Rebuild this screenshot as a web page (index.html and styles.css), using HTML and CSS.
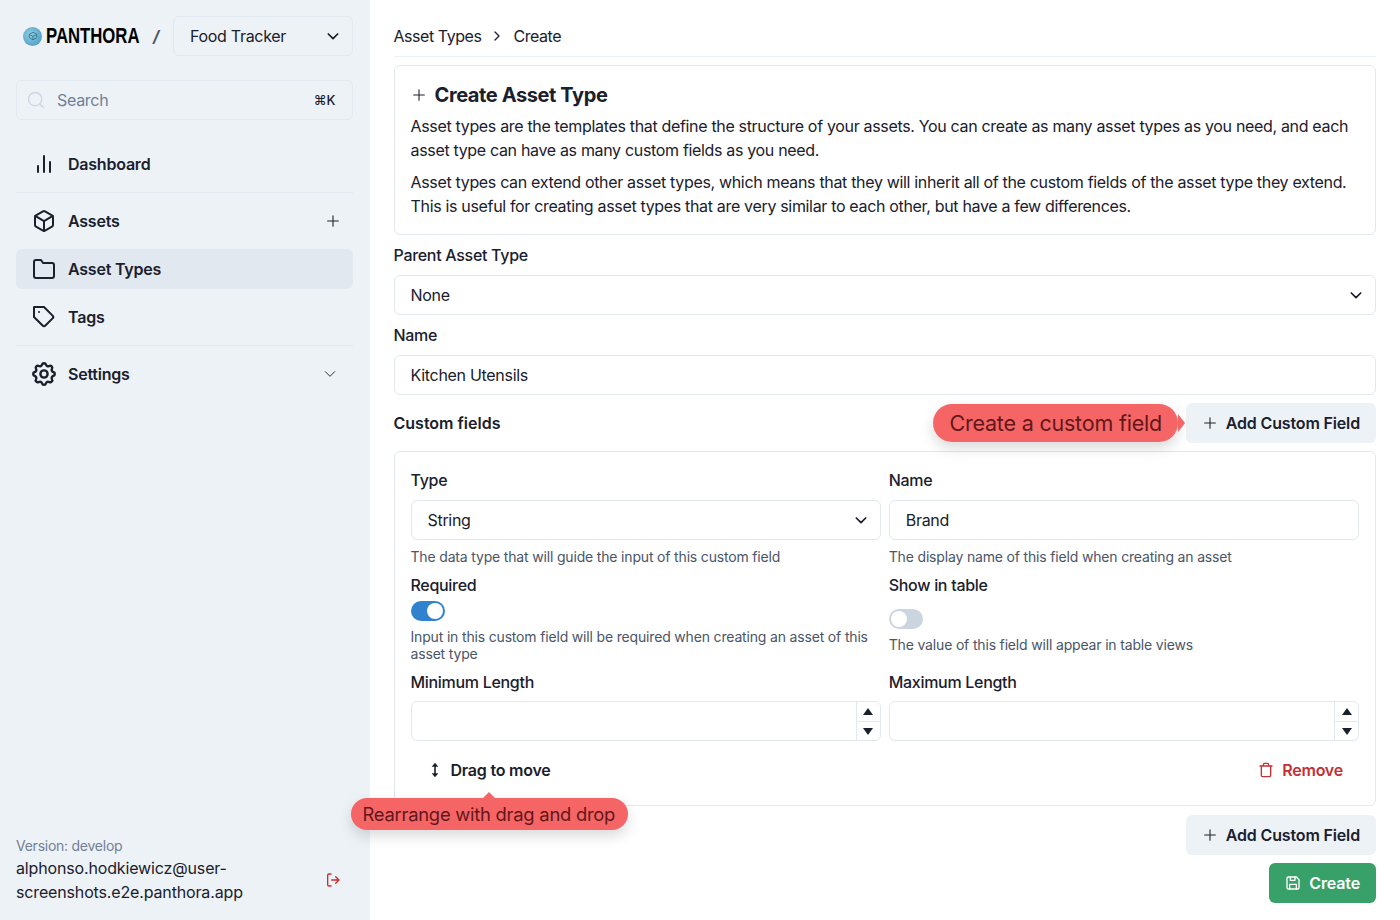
FILE: index.html
```html
<!DOCTYPE html>
<html lang="en">
<head>
    <meta charset="UTF-8">
    <meta name="viewport" content="width=device-width, initial-scale=1.0">
    <title>Create Asset Type - Panthora</title>
    <link rel="stylesheet" href="styles.css">
</head>
<body>
    <div class="page">
        <aside class="sidebar">
            <div class="brand-row">
                <div class="brand">
                    <span class="brand-mark">
                        <svg viewBox="0 0 24 24" width="10" height="10" fill="none" stroke="#2f6f96" stroke-width="2"><path d="M21 16V8l-9-5-9 5v8l9 5z"/><path d="M3 8l9 5 9-5M12 13v8"/></svg>
                    </span>
                    <span class="brand-name">PANTHORA</span>
                </div>
                <span class="brand-slash">/</span>
                <div class="select-wrap workspace">
                    <select class="field select-field">
                        <option>Food Tracker</option>
                    </select>
                    <svg class="chevron" viewBox="0 0 24 24" width="16" height="16" fill="none" stroke="#1a202c" stroke-width="2.6" stroke-linecap="round" stroke-linejoin="round"><path d="M5 9l7 7 7-7"/></svg>
                </div>
            </div>

            <div class="search">
                <svg viewBox="0 0 24 24" width="20" height="20" fill="none" stroke="#cbd5e0" stroke-width="1.6" stroke-linecap="round"><circle cx="11" cy="11" r="8"/><path d="M21 21l-4.3-4.3"/></svg>
                <span class="search-text">Search</span>
                <span class="search-key">⌘K</span>
            </div>

            <nav class="nav">
                <a class="nav-item">
                    <svg class="nav-icon" viewBox="0 0 24 24"><path d="M18 20V10M12 20V4M6 20v-6"/></svg>
                    <span>Dashboard</span>
                </a>
                <hr class="nav-line">
                <a class="nav-item">
                    <svg class="nav-icon" viewBox="0 0 24 24"><path d="M21 16V8a2 2 0 0 0-1-1.73l-7-4a2 2 0 0 0-2 0l-7 4A2 2 0 0 0 3 8v8a2 2 0 0 0 1 1.73l7 4a2 2 0 0 0 2 0l7-4A2 2 0 0 0 21 16z"/><path d="M3.27 6.96L12 12.01l8.73-5.05M12 22.08V12"/></svg>
                    <span>Assets</span>
                    <svg class="nav-plus" viewBox="0 0 24 24" width="16" height="16"><path d="M12 4v16M4 12h16"/></svg>
                </a>
                <a class="nav-item active">
                    <svg class="nav-icon" viewBox="0 0 24 24"><path d="M22 19a2 2 0 0 1-2 2H4a2 2 0 0 1-2-2V5a2 2 0 0 1 2-2h5l2 3h9a2 2 0 0 1 2 2z"/></svg>
                    <span>Asset Types</span>
                </a>
                <a class="nav-item">
                    <svg class="nav-icon" viewBox="0 0 24 24"><path d="M20.59 13.41l-7.17 7.17a2 2 0 0 1-2.83 0L2 12V2h10l8.59 8.59a2 2 0 0 1 0 2.82z"/><path d="M7 7h.01"/></svg>
                    <span>Tags</span>
                </a>
                <hr class="nav-line">
                <a class="nav-item">
                    <svg class="nav-icon" viewBox="2 2 20 20" stroke-width="1.7"><path d="M10.325 4.317c.426-1.756 2.924-1.756 3.35 0a1.724 1.724 0 0 0 2.573 1.066c1.543-.94 3.31.826 2.37 2.37a1.724 1.724 0 0 0 1.065 2.572c1.756.426 1.756 2.924 0 3.35a1.724 1.724 0 0 0-1.066 2.573c.94 1.543-.826 3.31-2.37 2.37a1.724 1.724 0 0 0-2.572 1.065c-.426 1.756-2.924 1.756-3.35 0a1.724 1.724 0 0 0-2.573-1.066c-1.543.94-3.31-.826-2.37-2.37a1.724 1.724 0 0 0-1.065-2.572c-1.756-.426-1.756-2.924 0-3.35a1.724 1.724 0 0 0 1.066-2.573c-.94-1.543.826-3.31 2.37-2.37 1 .608 2.296.07 2.572-1.065z"/><circle cx="12" cy="12" r="3"/></svg>
                    <span>Settings</span>
                    <svg class="nav-chevron" viewBox="0 0 24 24" width="14" height="14"><path d="M4 8l8 8 8-8"/></svg>
                </a>
            </nav>

            <div class="account">
                <div class="version">Version: develop</div>
                <div class="account-row">
                    <div class="email">alphonso.hodkiewicz@user-screenshots.e2e.panthora.app</div>
                    <svg class="logout" viewBox="0 0 24 24" width="16" height="16"><path d="M9 21H6a2 2 0 0 1-2-2V5a2 2 0 0 1 2-2h3"/><path d="M16 17l5-5-5-5M21 12H10"/></svg>
                </div>
            </div>
        </aside>

        <main class="main">
            <div class="crumbs">
                <span>Asset Types</span>
                <svg viewBox="0 0 24 24" width="12" height="12" fill="none" stroke="#1a202c" stroke-width="2.6" stroke-linecap="round" stroke-linejoin="round"><path d="M8 4l8 8-8 8"/></svg>
                <span>Create</span>
            </div>

            <section class="card intro">
                <h1 class="title">
                    <svg class="plus" viewBox="0 0 24 24" width="16" height="16"><path d="M12 4v16M4 12h16"/></svg>
                    Create Asset Type
                </h1>
                <p>Asset types are the templates that define the structure of your assets. You can create as many asset types as you need, and each asset type can have as many custom fields as you need.</p>
                <p>Asset types can extend other asset types, which means that they will inherit all of the custom fields of the asset type they extend. This is useful for creating asset types that are very similar to each other, but have a few differences.</p>
            </section>

            <div class="form-group">
                <label class="label">Parent Asset Type</label>
                <div class="select-wrap">
                    <select class="field select-field">
                        <option>None</option>
                    </select>
                    <svg class="chevron" viewBox="0 0 24 24" width="16" height="16" fill="none" stroke="#1a202c" stroke-width="2.6" stroke-linecap="round" stroke-linejoin="round"><path d="M5 9l7 7 7-7"/></svg>
                </div>
            </div>

            <div class="form-group">
                <label class="label">Name</label>
                <input class="field" type="text" value="Kitchen Utensils">
            </div>

            <div class="fields-head">
                <span class="fields-title">Custom fields</span>
                <div class="callout callout-right">Create a custom field</div>
                <button class="btn" type="button">
                    <svg class="plus" viewBox="0 0 24 24" width="16" height="16"><path d="M12 4v16M4 12h16"/></svg>
                    Add Custom Field
                </button>
            </div>

            <section class="card field-card">
                <div class="field-grid">
                    <div class="col">
                        <label class="label">Type</label>
                        <div class="select-wrap">
                            <select class="field select-field">
                                <option>String</option>
                            </select>
                            <svg class="chevron" viewBox="0 0 24 24" width="16" height="16" fill="none" stroke="#1a202c" stroke-width="2.6" stroke-linecap="round" stroke-linejoin="round"><path d="M5 9l7 7 7-7"/></svg>
                        </div>
                        <div class="help help-first">The data type that will guide the input of this custom field</div>
                    </div>
                    <div class="col">
                        <label class="label">Name</label>
                        <input class="field" type="text" value="Brand">
                        <div class="help help-first">The display name of this field when creating an asset</div>
                    </div>
                    <div class="col">
                        <label class="label">Required</label>
                        <span class="switch on"></span>
                        <div class="help">Input in this custom field will be required when creating an asset of this asset type</div>
                    </div>
                    <div class="col">
                        <label class="label">Show in table</label>
                        <span class="switch low"></span>
                        <div class="help">The value of this field will appear in table views</div>
                    </div>
                    <div class="col">
                        <label class="label">Minimum Length</label>
                        <div class="number">
                            <input class="field" type="text">
                            <div class="stepper">
                                <span class="step"><i class="tri up"></i></span>
                                <span class="step"><i class="tri down"></i></span>
                            </div>
                        </div>
                    </div>
                    <div class="col">
                        <label class="label">Maximum Length</label>
                        <div class="number">
                            <input class="field" type="text">
                            <div class="stepper">
                                <span class="step"><i class="tri up"></i></span>
                                <span class="step"><i class="tri down"></i></span>
                            </div>
                        </div>
                    </div>
                </div>
                <div class="card-actions">
                    <div class="drag">
                        <svg viewBox="0 0 24 24" width="16" height="16" fill="none" stroke="#1a202c" stroke-width="2.4"><path d="M12 4v16"/><path d="M12 1l5 6H7zM12 23l5-6H7z" fill="#1a202c" stroke="none"/></svg>
                        Drag to move
                        <div class="callout callout-top">Rearrange with drag and drop</div>
                    </div>
                    <div class="remove">
                        <svg viewBox="0 0 24 24" width="16" height="16" fill="none" stroke="#c53030" stroke-width="2" stroke-linecap="round" stroke-linejoin="round"><path d="M3 6h18M19 6v14a2 2 0 0 1-2 2H7a2 2 0 0 1-2-2V6M8 6V4a2 2 0 0 1 2-2h4a2 2 0 0 1 2 2v2"/></svg>
                        Remove
                    </div>
                </div>
            </section>

            <div class="actions">
                <button class="btn" type="button">
                    <svg class="plus" viewBox="0 0 24 24" width="16" height="16"><path d="M12 4v16M4 12h16"/></svg>
                    Add Custom Field
                </button>
                <button class="btn btn-green" type="button">
                    <svg viewBox="0 0 24 24" width="16" height="16" fill="none" stroke="#fff" stroke-width="2" stroke-linecap="round" stroke-linejoin="round"><path d="M6 3h11l4 4v12a2 2 0 0 1-2 2H5a2 2 0 0 1-2-2V5a2 2 0 0 1 2-2z"/><path d="M7 21v-7h10v7M8 3v5h7V3"/></svg>
                    Create
                </button>
            </div>
        </main>
    </div>
</body>
</html>
```

FILE: styles.css
```css
* {
    box-sizing: border-box;
}
body {
    margin: 0;
    font-family: Inter, "Liberation Sans", sans-serif;
    font-size: 16px;
    line-height: 24px;
    letter-spacing: -0.3px;
    color: #1a202c;
    background-color: white;
}
.page {
    display: flex;
    height: 100vh;
    overflow: hidden;
}

/* sidebar */
.sidebar {
    width: 369.5px;
    flex-shrink: 0;
    display: flex;
    flex-direction: column;
    padding: 16px;
    background-color: #edf2f7;
    border-right: 1px solid #f0f4f8;
}
.brand-row {
    display: flex;
    align-items: center;
}
.brand {
    display: flex;
    align-items: center;
    gap: 4px;
    width: 135px;
    padding-left: 7px;
}
.brand-mark {
    flex-shrink: 0;
    width: 19px;
    height: 19px;
    display: flex;
    align-items: center;
    justify-content: center;
    border-radius: 50%;
    background: radial-gradient(circle at 40% 40%, #8fd0de, #3f8fc0);
}
.brand-name {
    display: inline-block;
    flex-shrink: 0;
    width: 124px;
    margin-right: -30px;
    font-family: "Liberation Sans", sans-serif;
    font-size: 22px;
    font-weight: 700;
    letter-spacing: 0;
    color: black;
    transform: scaleX(0.76);
    transform-origin: left center;
}
.brand-slash {
    width: 22px;
    padding-left: 2px;
    font-size: 16px;
    font-weight: 700;
    font-style: italic;
    color: #4a5568;
}
.workspace {
    flex: 1;
}
.select-wrap {
    position: relative;
}
.chevron {
    position: absolute;
    right: 12px;
    top: 12px;
}
.field {
    display: block;
    width: 100%;
    height: 40px;
    padding: 0 16px;
    font-family: inherit;
    font-size: 16px;
    letter-spacing: inherit;
    color: #1a202c;
    background-color: transparent;
    border: 1px solid #e2e8f0;
    border-radius: 6px;
}
.select-field {
    appearance: none;
    padding-right: 40px;
}
.search {
    display: flex;
    align-items: center;
    height: 40px;
    margin-top: 24px;
    padding: 0 16px 0 9px;
    border: 1px solid #e2e8f0;
    border-radius: 6px;
}
.search-text {
    flex: 1;
    margin-left: 11px;
    color: #718096;
}
.search-key {
    font-size: 13px;
    font-weight: 500;
    letter-spacing: 0;
}
.nav {
    display: flex;
    flex-direction: column;
    gap: 8px;
    margin-top: 24px;
}
.nav-item {
    display: flex;
    align-items: center;
    gap: 12px;
    height: 40px;
    padding: 0 16px;
    font-weight: 600;
    letter-spacing: -0.22px;
    border-radius: 6px;
}
.nav-item.active {
    background-color: #e2e8f0;
}
.nav-icon {
    width: 24px;
    height: 24px;
    fill: none;
    stroke: #1a202c;
    stroke-width: 2;
    stroke-linecap: round;
    stroke-linejoin: round;
}
.nav-plus,
.plus {
    flex-shrink: 0;
    fill: none;
    stroke: #1a202c;
    stroke-width: 1.6;
    stroke-linecap: round;
}
.nav-plus {
    margin-left: auto;
    margin-right: -4px;
}
.nav-chevron {
    margin-left: auto;
    margin-right: 0;
    fill: none;
    stroke: #1a202c;
    stroke-width: 1.6;
    stroke-linecap: round;
    stroke-linejoin: round;
}
.nav-line {
    width: 100%;
    margin: 0;
    border: none;
    border-top: 1px solid #e2e8f0;
}
.account {
    margin-top: auto;
}
.version {
    font-size: 14px;
    line-height: 20px;
    letter-spacing: -0.25px;
    color: #718096;
}
.account-row {
    display: flex;
    align-items: center;
    justify-content: space-between;
}
.email {
    width: 270px;
    letter-spacing: -0.15px;
}
.logout {
    margin-right: 12px;
    fill: none;
    stroke: #c53030;
    stroke-width: 2;
    stroke-linecap: round;
    stroke-linejoin: round;
}

/* main */
.main {
    flex: 1;
    display: flex;
    flex-direction: column;
    gap: 8px;
    padding: 16px 24px 0;
}
.crumbs {
    display: flex;
    align-items: center;
    gap: 10px;
    height: 41px;
    padding-bottom: 1px;
    letter-spacing: -0.45px;
    border-bottom: 1px solid #edf2f7;
}
.card {
    border: 1px solid #e2e8f0;
    border-radius: 6px;
}
.intro {
    padding: 16px;
    height: 170px;
}
.intro p {
    margin: 0 0 8px;
    letter-spacing: -0.33px;
}
.title {
    display: flex;
    align-items: center;
    gap: 8px;
    margin: 0 0 6px;
    height: 26px;
    font-size: 20px;
    font-weight: 700;
    letter-spacing: -0.4px;
}
.form-group {
    display: flex;
    flex-direction: column;
    gap: 8px;
}
.label {
    font-weight: 500;
}
.fields-head {
    position: relative;
    display: flex;
    align-items: center;
    justify-content: space-between;
}
.fields-title {
    font-weight: 600;
    letter-spacing: 0;
}
.btn {
    display: inline-flex;
    align-items: center;
    gap: 8px;
    height: 40px;
    padding: 0 16px;
    font-family: inherit;
    font-size: 16px;
    font-weight: 600;
    letter-spacing: -0.15px;
    color: #1a202c;
    background-color: #edf2f7;
    border: none;
    border-radius: 6px;
}
.btn-green {
    color: white;
    background-color: #38a169;
}
.field-card {
    padding: 16px;
    height: 355px;
    margin-bottom: 0.5px;
}
.field-grid {
    display: grid;
    grid-template-columns: 1fr 1fr;
    gap: 8px;
}
.col {
    display: flex;
    flex-direction: column;
    gap: 8px;
}
.help {
    font-size: 14px;
    line-height: 1.2;
    letter-spacing: -0.17px;
    color: #4a5568;
}
.help-first {
    margin-top: 1px;
    margin-bottom: -1px;
}
.switch {
    position: relative;
    display: block;
    width: 34px;
    height: 20px;
    border-radius: 10px;
    margin-top: -4px;
}
.switch::after {
    content: "";
    position: absolute;
    top: 2px;
    left: 2px;
    width: 16px;
    height: 16px;
    border-radius: 50%;
    background-color: white;
}
.switch.on {
    background-color: #3182ce;
}
.switch.on::after {
    left: 16px;
}
.switch.low {
    margin-top: 4px;
    background-color: #cbd5e0;
}
.number {
    position: relative;
    margin-top: -1px;
}
.stepper {
    position: absolute;
    top: 1px;
    right: 1px;
    bottom: 1px;
    width: 24px;
    display: flex;
    flex-direction: column;
    border-left: 1px solid #e2e8f0;
}
.step {
    flex: 1;
    display: flex;
    align-items: center;
    justify-content: center;
}
.step + .step {
    border-top: 1px solid #e2e8f0;
}
.tri {
    width: 0;
    height: 0;
    border-left: 5.5px solid transparent;
    border-right: 5.5px solid transparent;
}
.tri.up {
    border-bottom: 7px solid #1a202c;
}
.tri.down {
    border-top: 7px solid #1a202c;
}
.card-actions {
    display: flex;
    align-items: center;
    justify-content: space-between;
    height: 40px;
    margin-top: 9px;
    padding: 0 16px;
}
.drag,
.remove {
    position: relative;
    display: flex;
    align-items: center;
    gap: 8px;
    font-weight: 600;
    letter-spacing: -0.22px;
}
.remove {
    color: #c53030;
}
.actions {
    display: flex;
    flex-direction: column;
    align-items: flex-end;
    gap: 8px;
}

/* red onboarding hints */
.callout {
    position: absolute;
    white-space: nowrap;
    color: #63171b;
    font-weight: 400;
    background-color: #f56565;
    border-radius: 19px;
    box-shadow: 0 6px 14px rgba(0, 0, 0, 0.15);
}
.callout::after {
    content: "";
    position: absolute;
    border: 6px solid transparent;
}
.callout-right {
    right: 198px;
    top: 1px;
    height: 38px;
    padding: 0 16px;
    font-size: 21.5px;
    letter-spacing: -0.2px;
    line-height: 38px;
}
.callout-right::after {
    left: 100%;
    top: 10px;
    border-width: 9px 0 9px 7px;
    border-left-color: #f56565;
}
.callout-top {
    left: -76px;
    top: 40px;
    height: 32px;
    padding: 0 13px 0 12px;
    font-size: 18.4px;
    letter-spacing: -0.25px;
    line-height: 32px;
}
.callout-top::after {
    left: 50%;
    top: -6px;
    margin-left: -6px;
    border-bottom-color: #f56565;
    border-top-width: 0;
}
```
